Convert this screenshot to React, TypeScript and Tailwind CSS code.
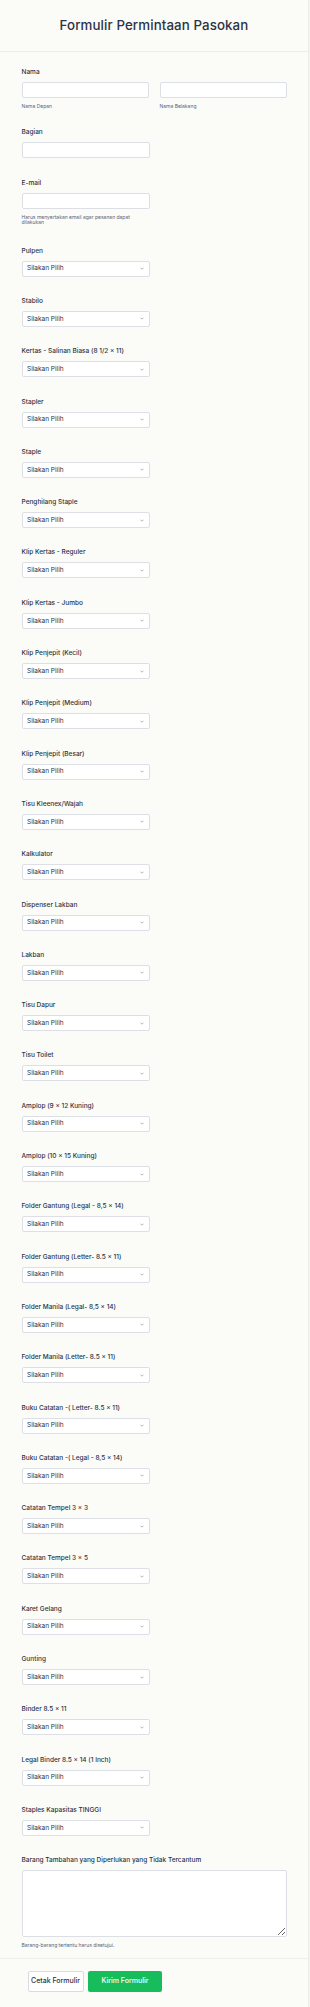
const items = [
  'Pulpen',
  'Stabilo',
  'Kertas - Salinan Biasa (8 1/2 × 11)',
  'Stapler',
  'Staple',
  'Penghilang Staple',
  'Klip Kertas - Reguler',
  'Klip Kertas - Jumbo',
  'Klip Penjepit (Kecil)',
  'Klip Penjepit (Medium)',
  'Klip Penjepit (Besar)',
  'Tisu Kleenex/Wajah',
  'Kalkulator',
  'Dispenser Lakban',
  'Lakban',
  'Tisu Dapur',
  'Tisu Toilet',
  'Amplop (9 × 12 Kuning)',
  'Amplop (10 × 15 Kuning)',
  'Folder Gantung (Legal - 8,5 × 14)',
  'Folder Gantung (Letter- 8.5 × 11)',
  'Folder Manila (Legal- 8,5 × 14)',
  'Folder Manila (Letter- 8.5 × 11)',
  'Buku Catatan -( Letter- 8.5 × 11)',
  'Buku Catatan -( Legal - 8,5 × 14)',
  'Catatan Tempel 3 × 3',
  'Catatan Tempel 3 × 5',
  'Karet Gelang',
  'Gunting',
  'Binder 8.5 × 11',
  'Legal Binder 8.5 × 14 (1 Inch)',
  'Staples Kapasitas TINGGI',
]

const font = { fontFamily: 'Inter, "Noto Sans", sans-serif' }

export default function App() {
  return (
    <div className="min-h-[2007px] w-[310px] bg-[#f4f4f1]" style={font}>
      <div className="w-[309px] min-h-[2007px] border-r border-[#ececea] bg-[#fbfcf8]">
        <header className="flex h-[52px] items-center justify-center border-b border-[#ececec]">
          <h1 className="text-[13.3px] font-medium leading-none tracking-[0.1px] text-[#2c3345]">Formulir Permintaan Pasokan</h1>
        </header>

        <ul className="px-[21.5px] pt-[5px]">
          <li className="pt-[10px] pb-[8.25px]">
            <Label>Nama</Label>
            <div className="grid grid-cols-2 gap-[11px]">
              <div>
                <TextBox />
                <Sub className="mt-[5px]">Nama Depan</Sub>
              </div>
              <div>
                <TextBox />
                <Sub className="mt-[5px]">Nama Belakang</Sub>
              </div>
            </div>
          </li>

          <li className="pt-[10px] pb-[9.25px]">
            <Label>Bagian</Label>
            <div className="w-[128px]">
              <TextBox />
            </div>
          </li>

          <li className="pt-[10px] pb-[10.7px]">
            <Label>E-mail</Label>
            <div className="w-[128px]">
              <TextBox />
              <p className="mt-[6.5px] text-[5px] leading-[5px] text-[#57647e]">
                Harus menyertakan email agar pesanan dapat dilakukan
              </p>
            </div>
          </li>

          {items.map((name) => (
            <li key={name} className="pt-[10px] pb-[9.3px]">
              <Label>{name}</Label>
              <SelectBox />
            </li>
          ))}

          <li className="pt-[10px] pb-[9.5px]">
            <Label>Barang Tambahan yang Diperlukan yang Tidak Tercantum</Label>
            <textarea className="block h-[67px] w-full resize-y rounded-[2px] border border-[#dcdfe6] bg-white outline-none" />
            <Sub className="mt-[5px]">Barang-barang tertentu harus disetujui.</Sub>
          </li>
        </ul>

        <div className="border-t border-[#efefec] px-[27.5px] pt-[12.5px] pb-[16px]">
          <div className="flex gap-[4.5px]">
            <button className="h-[20.5px] w-[56px] rounded-[2px] border border-[#d8dbe2] bg-white text-[7px] font-medium text-[#2c3345]">
              Cetak Formulir
            </button>
            <button className="h-[20.5px] w-[74px] rounded-[2px] bg-[#18bd5b] text-[7px] font-medium text-white">
              Kirim Formulir
            </button>
          </div>
        </div>
      </div>
    </div>
  )
}

function Label({ children }: { children: React.ReactNode }) {
  return <label className="mb-[5px] block text-[6.5px] font-medium leading-[10px] text-[#2c3345]">{children}</label>
}

function Sub({ children, className = '' }: { children: React.ReactNode; className?: string }) {
  return <p className={`text-[5px] leading-[6px] text-[#57647e] ${className}`}>{children}</p>
}

function TextBox() {
  return <div className="h-[16px] w-full rounded-[2px] border border-[#dcdfe6] bg-white" />
}

function SelectBox() {
  return (
    <div className="flex h-[16px] w-[128px] items-center justify-between rounded-[2px] border border-[#dcdfe6] bg-white pl-[4.5px] pr-[5px]">
      <span className="text-[6.5px] leading-none text-[#2c3345]">Silakan Pilih</span>
      <svg width="4" height="3" viewBox="0 0 4 3" fill="none" stroke="#8a93a6" strokeWidth="0.7">
        <path d="M0.5 0.7 L2 2.2 L3.5 0.7" />
      </svg>
    </div>
  )
}
